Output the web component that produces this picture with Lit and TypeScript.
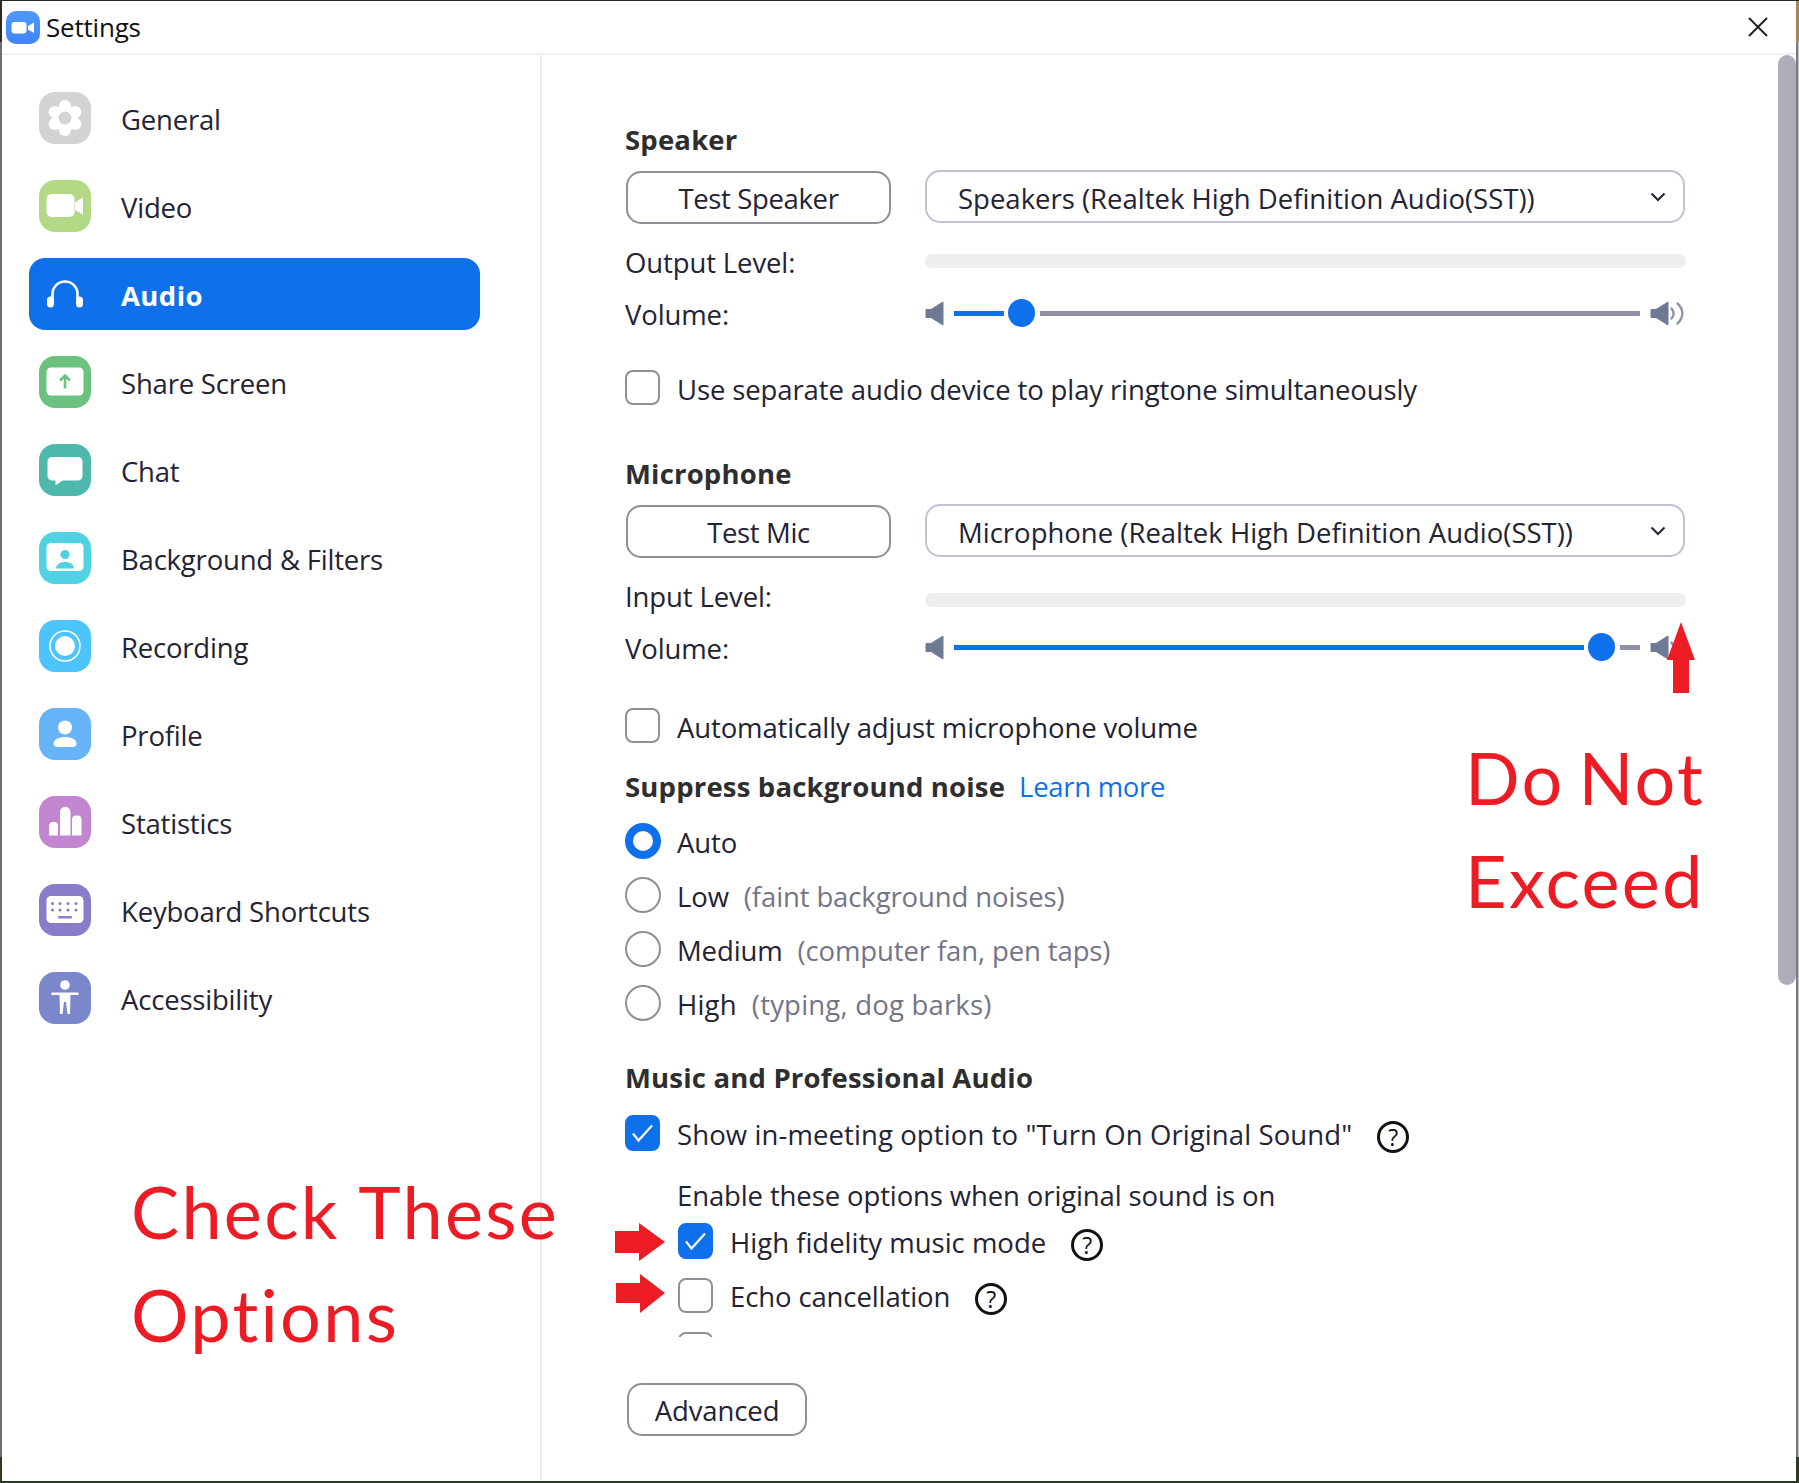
import { LitElement, html, css, svg } from "lit";
import { customElement } from "lit/decorators.js";

const ic = (bg: string, inner: unknown) => html`<svg class="nav-icon" viewBox="0 0 52 52"><rect width="52" height="52" rx="16" fill=${bg}></rect>${inner}</svg>`;

const NAV = [
  { label: "General", icon: ic("#d3d3d3", svg`<g fill="#fff"><circle cx="26" cy="26" r="13"/><circle cx="26" cy="14" r="6"/><circle cx="26" cy="38" r="6"/><circle cx="15.6" cy="20" r="6"/><circle cx="36.4" cy="20" r="6"/><circle cx="15.6" cy="32" r="6"/><circle cx="36.4" cy="32" r="6"/></g><circle cx="26" cy="26" r="6.5" fill="#d3d3d3"/>`) },
  { label: "Video", icon: ic("#b3d987", svg`<rect x="7.5" y="14" width="28" height="23" rx="5" fill="#fff"/><path d="M36 22.5 44 17.5V34.5L36 30Z" fill="#fff"/>`) },
  { label: "Audio", active: true, icon: html`<svg class="nav-icon" viewBox="0 0 52 52"><path d="M13.5 32V26a12.5 12.5 0 0 1 25 0V32" fill="none" stroke="#fff" stroke-width="2.6"/><rect x="8" y="28.5" width="7" height="11" rx="3.5" fill="#fff"/><rect x="37" y="28.5" width="7" height="11" rx="3.5" fill="#fff"/></svg>` },
  { label: "Share Screen", icon: ic("#6cc17f", svg`<rect x="7.5" y="11.5" width="37" height="28" rx="4.5" fill="#fff"/><path d="M26 32.5V20M21 24.5l5-5 5 5" fill="none" stroke="#6cc17f" stroke-width="2.6"/>`) },
  { label: "Chat", icon: ic("#4fb8ad", svg`<path d="M13 13H39a4.5 4.5 0 0 1 4.5 4.5V32a4.5 4.5 0 0 1-4.5 4.500H23.500L16.500 41.500V36.500H13a4.500 4.500 0 0 1-4.500-4.500V17.500A4.500 4.500 0 0 1 13 13Z" fill="#fff"/>`) },
  { label: "Background & Filters", icon: ic("#50d2e3", svg`<rect x="7.5" y="11" width="37" height="28" rx="4.5" fill="#fff"/><circle cx="26" cy="22.500" r="4.600" fill="#50d2e3"/><path d="M17 36.500c0-4 4-6.500 9-6.500s9 2.500 9 6.500Z" fill="#50d2e3"/>`) },
  { label: "Recording", icon: ic("#4dc4fb", svg`<circle cx="26" cy="26" r="15" fill="none" stroke="#fff" stroke-width="1.500"/><circle cx="26" cy="26" r="10" fill="#fff"/>`) },
  { label: "Profile", icon: ic("#66b4f7", svg`<circle cx="26" cy="19.500" r="7" fill="#fff"/><path d="M14.500 35.500c0-4 5-6.500 11.500-6.500s11.500 2.500 11.500 6.500c0 2-1.500 3.500-3.500 3.500H18c-2 0-3.500-1.500-3.500-3.500Z" fill="#fff"/>`) },
  { label: "Statistics", icon: ic("#c285d0", svg`<g fill="#fff"><path d="M10 39.500V30a4 4 0 0 1 4-4h1a4 4 0 0 1 4 4v9.500Z"/><path d="M21 39.500V16a4.800 4.800 0 0 1 10.500 0v23.500Z"/><path d="M33 39.500V23.500a4 4 0 0 1 4-4h1.500a4 4 0 0 1 4 4v16Z"/></g>`) },
  { label: "Keyboard Shortcuts", icon: ic("#8a7cc9", svg`<rect x="7.500" y="12" width="37" height="27" rx="4.500" fill="#fff"/><g fill="#8a7cc9"><circle cx="13.500" cy="19.500" r="1.500"/><circle cx="21" cy="19.500" r="1.500"/><circle cx="29" cy="19.500" r="1.500"/><circle cx="37" cy="19.500" r="1.500"/><circle cx="13.500" cy="26" r="1.500"/><circle cx="21" cy="26" r="1.500"/><circle cx="29" cy="26" r="1.500"/><circle cx="37" cy="26" r="1.500"/><rect x="19" y="32" width="14" height="2.500" rx="1.200"/></g>`) },
  { label: "Accessibility", icon: ic("#7b87cb", svg`<circle cx="26" cy="13" r="4.800" fill="#fff"/><path d="M13.500 20.500H38.500a1.200 1.200 0 0 1 0 2.500H31.500L31 42H28.500L27 30H25L23.500 42H21L20.500 23H13.500a1.200 1.200 0 0 1 0-2.500Z" fill="#fff"/>`) },
];

const speakerLow = html`<svg class="spk-low" viewBox="0 0 17 23"><path d="M0 7.500H5L17 0V23L5 15.500H0Z" fill="#6e7a94" stroke="#6e7a94" stroke-linejoin="round"></path></svg>`;
const speakerHigh = html`<svg class="spk-high" viewBox="0 0 33 23"><path d="M0 7.500H5L17 0V23L5 15.500H0Z" fill="#6e7a94" stroke="#6e7a94" stroke-linejoin="round"></path><path d="M20.500 6.500c2.600 3.200 2.600 7 0 10M26.500 1.500c6.500 6 6.500 14 0 20" fill="none" stroke="#8d96aa" stroke-width="2.400" stroke-linecap="round"></path></svg>`;
const help = html`<span class="help"><span>?</span></span>`;
const tick = html`<svg class="tick" viewBox="0 0 35 36"><path d="M8 18.500 13.500 25.500 27 10.500" fill="none" stroke="#fff" stroke-width="2.200"></path></svg>`;
const chevron = html`<svg class="chev" viewBox="0 0 16 10"><path d="M1.500 1.500 8 8l6.500-6.500" fill="none" stroke="#232333" stroke-width="2"></path></svg>`;

@customElement("app-root")
export class AppRoot extends LitElement {
  static styles = css`
    :host {
      display: block; width: 1799px; height: 1483px; overflow: hidden; position: relative;
      font-family: "Open Sans", "Liberation Sans", sans-serif; color: #232333;
      font-size: 27.5px; letter-spacing: -0.12px;
      background:
        linear-gradient(#2f2a20, #2f2a20) 0 0 / 100% 1px no-repeat,
        linear-gradient(#2f2a20, #2f2a20) 0 0 / 3px 42px no-repeat,
        linear-gradient(#a9874f, #a9874f) 100% 0 / 3px 42px no-repeat,
        linear-gradient(#2c3a22, #2c3a22) 0 100% / 100% 26px no-repeat,
        linear-gradient(90deg, #6e6e6e 0 2px, #ffffff 2px 1796px, #7b7b7b 1796px 1798px, #c4c4c4 1798px);
    }
    .window { position: absolute; inset: 1px 3px 2px 2px; background: #fff; display: flex; flex-direction: column; }
    .title { height: 52px; flex: none; border-bottom: 2px solid #eef0f3; display: flex; align-items: center; position: relative; box-sizing: content-box; }
    .app-icon { width: 34px; height: 33px; margin-left: 4px; }
    .title-text { margin-left: 6px; color: #111; font-size: 26px; letter-spacing: -0.2px; }
    .close { margin-left: auto; margin-right: 28px; width: 20px; height: 20px; margin-top: -1px; }
    .body { flex: 1; display: flex; min-height: 0; position: relative; }
    .side { width: 540px; flex: none; border-right: 2px solid #e9e9f1; padding: 27px 0 0 27px; box-sizing: border-box; display: flex; flex-direction: column; gap: 16px; letter-spacing: -0.2px; }
    .item { width: 451px; height: 72px; display: flex; align-items: center; gap: 30px; padding-left: 10px; box-sizing: border-box; border-radius: 16px; }
    .item-label { padding-top: 2px; }
    .item.active { background: #0e71eb; color: #fff; font-weight: 700; letter-spacing: 0.4px; }
    .nav-icon { width: 52px; height: 52px; flex: none; }
    .main { flex: 1; padding-left: 83px; position: relative; min-width: 0; }
    .scroll { height: 1282px; overflow: hidden; padding-top: 65px; box-sizing: border-box; }
    .scrollbar { position: absolute; top: 0; right: 0; width: 18px; height: 930px; background: #adaeb8; border-radius: 9px; }
    .h { height: 37px; display: flex; align-items: center; font-weight: 700; color: #2e2e2e; letter-spacing: 0.18px; padding-top: 2px; box-sizing: border-box; }
    .h.low { height: 35px; }
    .link { color: #0e71eb; font-weight: 400; margin-left: 14px; letter-spacing: -0.3px; }
    .btn { border: 2px solid #8f8f97; border-radius: 15px; height: 53px; display: flex; align-items: center; justify-content: center; box-sizing: border-box; background: #fff; padding-top: 2px; letter-spacing: -0.35px; }
    .btn.test { width: 265px; margin: 1px 0 0 1px; }
    .btn.adv { width: 180px; margin: 46px 0 0 2px; letter-spacing: -0.1px; }
    .devices { display: flex; height: 54px; margin-top: 13px; gap: 34px; }
    .select { width: 760px; height: 53px; border: 2px solid #c1c1d4; border-radius: 15px; box-sizing: border-box; display: flex; align-items: center; padding: 3px 0 0 31px; position: relative; letter-spacing: 0; }
    .chev { position: absolute; right: 17px; top: 20px; width: 16px; height: 10px; }
    .line { display: grid; grid-template-columns: 300px 761px; align-items: center; height: 35px; }
    .line.level { margin-top: 20px; }
    .line.vol { margin-top: 17px; }
    .bar { height: 14px; border-radius: 7px; background: #eeeeee; }
    .bar.up { margin-bottom: 3px; }
    .bar.down { margin-top: 7px; }
    .vol-ctl { display: flex; align-items: center; margin-bottom: 3px; }
    .vol-ctl.mic { margin-bottom: 3px; }
    .spk-low { width: 17px; height: 23px; margin-left: 1px; flex: none; overflow: visible; }
    .spk-high { width: 33px; height: 23px; margin-left: 11px; flex: none; overflow: visible; }
    .slider { display: flex; align-items: center; margin-left: 11px; width: 686px; flex: none; }
    .fill { height: 5px; background: #0e71eb; flex: none; }
    .thumb { width: 27px; height: 28px; border-radius: 50%; background: #0e71eb; margin: 0 5px 0 4px; flex: none; }
    .rest { height: 5px; background: #8f8fa8; flex: 1; }
    .opt { display: flex; align-items: center; gap: 17px; height: 35px; }
    .opt-plain { padding-top: 3px; }
    .box { width: 35px; height: 35px; border: 2px solid #8f8f97; border-radius: 8px; box-sizing: border-box; flex: none; background: #fff; }
    .box.on { background: #0e71eb; border-color: #0e71eb; position: relative; height: 36px; }
    .tick { position: absolute; left: -2px; top: -2px; width: 35px; height: 36px; }
    .radio-list { display: flex; flex-direction: column; gap: 18px; margin-top: 20px; }
    .radio-row { height: 36px; display: flex; align-items: center; gap: 16px; }
    .radio { width: 36px; height: 36px; border: 2px solid #8f8f97; border-radius: 50%; box-sizing: border-box; flex: none; }
    .radio.on { border: 8px solid #0e71eb; }
    .radio-text { padding-top: 3px; display: flex; gap: 15px; }
    .radio-text.wide { letter-spacing: 0.2px; }
    .muted { color: #747487; }
    .sec-speaker-opt { margin-top: 39px; }
    .sec-mic-opt { margin-top: 43px; }
    .sec-mic { margin-top: 49px; }
    .suppress { margin-top: 25px; }
    .music { margin-top: 38px; }
    .show { margin-top: 21px; height: 36px; letter-spacing: 0.1px; }
    .enable { margin: 27px 0 0 52px; height: 35px; display: flex; align-items: center; }
    .sub { margin: 10px 0 0 53px; height: 36px; }
    .sub.next { margin-top: 18px; }
    .fidelity { letter-spacing: 0; }
    .opt-text { padding-top: 2px; display: flex; align-items: center; }
    .help { width: 32px; height: 32px; border: 3px solid #111; border-radius: 50%; box-sizing: border-box; display: inline-flex; align-items: center; justify-content: center; color: #111; font-size: 23px; font-weight: 500; margin-left: 25px; flex: none; margin-top: 6px; letter-spacing: 0; }
    .note { position: absolute; color: #ed1c24; font-family: Lato, "Open Sans", sans-serif; font-size: 72px; line-height: 103px; letter-spacing: 2.3px; white-space: pre; font-variant-ligatures: none; }
    .note.a { left: 1465px; top: 726px; word-spacing: -7px; }
    .note.b { left: 131px; top: 1160px; }
    .arrow { position: absolute; left: 0; top: 0; width: 1799px; height: 1483px; pointer-events: none; }
  `;

  private slider(fill: number, mic = false) {
    return html`<div class="vol-ctl ${mic ? "mic" : ""}">${speakerLow}
      <div class="slider"><div class="fill" style="width:${fill}px"></div><div class="thumb"></div><div class="rest"></div></div>
      ${speakerHigh}</div>`;
  }

  render() {
    return html`
      <div class="window">
        <div class="title">
          <svg class="app-icon" viewBox="0 0 34 33">
            <defs><linearGradient id="g" x1="0" y1="0" x2="0" y2="1"><stop offset="0" stop-color="#4f98ff"></stop><stop offset="1" stop-color="#3f85f5"></stop></linearGradient></defs>
            <rect width="34" height="33" rx="10" fill="url(#g)"></rect>
            <rect x="5.500" y="11" width="15" height="11.500" rx="3" fill="#fff"></rect>
            <path d="M22 15 28 11.500V22L22 18.500Z" fill="#fff"></path>
          </svg>
          <span class="title-text">Settings</span>
          <svg class="close" viewBox="0 0 20 20"><path d="M1 1 19 19M19 1 1 19" stroke="#222" stroke-width="2" fill="none"></path></svg>
        </div>
        <div class="body">
          <nav class="side">
            ${NAV.map((n) => html`<div class="item ${n.active ? "active" : ""}">${n.icon}<span class="item-label">${n.label}</span></div>`)}
          </nav>
          <div class="main">
            <div class="scroll">
              <div class="h">Speaker</div>
              <div class="devices">
                <div class="btn test">Test Speaker</div>
                <div class="select">Speakers (Realtek High Definition Audio(SST))${chevron}</div>
              </div>
              <div class="line level"><span>Output Level:</span><div class="bar up"></div></div>
              <div class="line vol"><span>Volume:</span>${this.slider(50)}</div>
              <div class="opt sec-speaker-opt"><div class="box"></div><span class="opt-plain">Use separate audio device to play ringtone simultaneously</span></div>

              <div class="h sec-mic">Microphone</div>
              <div class="devices">
                <div class="btn test">Test Mic</div>
                <div class="select">Microphone (Realtek High Definition Audio(SST))${chevron}</div>
              </div>
              <div class="line level"><span>Input Level:</span><div class="bar down"></div></div>
              <div class="line vol"><span>Volume:</span>${this.slider(630, true)}</div>
              <div class="opt sec-mic-opt"><div class="box"></div><span class="opt-plain">Automatically adjust microphone volume</span></div>

              <div class="h low suppress">Suppress background noise<span class="link">Learn more</span></div>
              <div class="radio-list">
                <div class="radio-row"><div class="radio on"></div><div class="radio-text">Auto</div></div>
                <div class="radio-row"><div class="radio"></div><div class="radio-text"><span>Low</span><span class="muted">(faint background noises)</span></div></div>
                <div class="radio-row"><div class="radio"></div><div class="radio-text"><span>Medium</span><span class="muted">(computer fan, pen taps)</span></div></div>
                <div class="radio-row"><div class="radio"></div><div class="radio-text wide"><span>High</span><span class="muted">(typing, dog barks)</span></div></div>
              </div>

              <div class="h low music">Music and Professional Audio</div>
              <div class="opt show"><div class="box on">${tick}</div><span class="opt-text">Show in-meeting option to "Turn On Original Sound"${help}</span></div>
              <div class="enable">Enable these options when original sound is on</div>
              <div class="opt sub fidelity"><div class="box on">${tick}</div><span class="opt-text">High fidelity music mode${help}</span></div>
              <div class="opt sub next"><div class="box"></div><span class="opt-text">Echo cancellation${help}</span></div>
              <div class="opt sub next"><div class="box"></div></div>
            </div>
            <div class="btn adv">Advanced</div>
            <div class="scrollbar"></div>
          </div>
        </div>
      </div>
      <div class="note a">Do Not
Exceed</div>
      <div class="note b">Check These
Options</div>
      <svg class="arrow" viewBox="0 0 1799 1483">
        <path d="M1681 622 1695 660H1689V693H1673V660H1667Z" fill="#ed1c24"></path>
        <path d="M615 1231H639V1223L665 1242 639 1261V1253H615Z" fill="#ed1c24"></path>
        <path d="M616 1283H640V1274L665 1293 640 1313V1303H616Z" fill="#ed1c24"></path>
      </svg>
    `;
  }
}
